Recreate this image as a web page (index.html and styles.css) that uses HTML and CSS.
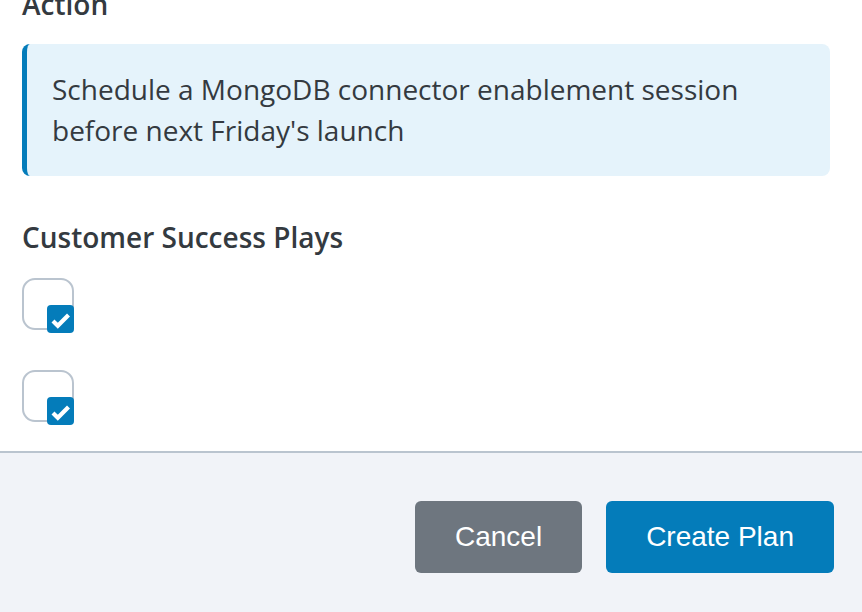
FILE: index.html
```html
<!DOCTYPE html>
<html>
<head>
<meta charset="utf-8">
<link rel="stylesheet" href="styles.css">
</head>
<body>
<div class="content">
  <h3 class="label label-top">Action</h3>
  <div class="callout">Schedule a MongoDB connector enablement session before next Friday's launch</div>
  <h3 class="label label-plays">Customer Success Plays</h3>
  <div class="plays">
    <div class="play">
      <span class="box"></span>
      <span class="check"><svg viewBox="0 0 27 28" width="27" height="28"><path d="M6 16 L10.8 20.8 L21.5 10" fill="none" stroke="#fff" stroke-width="4.2" stroke-linecap="butt" stroke-linejoin="miter"/></svg></span>
    </div>
    <div class="play">
      <span class="box"></span>
      <span class="check"><svg viewBox="0 0 27 28" width="27" height="28"><path d="M6 16 L10.8 20.8 L21.5 10" fill="none" stroke="#fff" stroke-width="4.2" stroke-linecap="butt" stroke-linejoin="miter"/></svg></span>
    </div>
  </div>
</div>
<div class="footer">
  <button class="btn btn-cancel">Cancel</button>
  <button class="btn btn-primary">Create Plan</button>
</div>
</body>
</html>
```
FILE: styles.css
```css
html, body {
  margin: 0;
  padding: 0;
  background: #ffffff;
  overflow: hidden;
}
body {
  font-family: "Open Sans", sans-serif;
  color: #343a40;
  width: 862px;
  height: 612px;
  display: flex;
  flex-direction: column;
}
.content {
  padding: 0 32px 0 22px;
}
.label {
  margin: 0;
  font-size: 28px;
  font-weight: 600;
  line-height: 36px;
  color: #343a40;
}
.label-top {
  margin-top: -14px;
  margin-bottom: 22px;
}
.callout {
  background: #e5f3fb;
  border-left: 5px solid #047cba;
  border-radius: 8px;
  padding: 25px 24px 26px 25px;
  font-size: 28px;
  line-height: 40.6px;
}
.label-plays {
  margin-top: 43px;
  margin-bottom: 23px;
}
.plays {
  display: flex;
  flex-direction: column;
  gap: 40px;
  padding-bottom: 29px;
}
.play {
  position: relative;
  width: 52px;
  height: 52px;
}
.box {
  display: block;
  box-sizing: border-box;
  width: 52px;
  height: 52px;
  border: 2px solid #bac4cf;
  border-radius: 13px;
}
.check {
  position: absolute;
  left: 25px;
  top: 27px;
  width: 27px;
  height: 28px;
  background: #047cba;
  border-radius: 4px;
  display: flex;
}
.footer {
  flex: 1;
  min-height: 0;
  border-top: 2px solid #bac4cf;
  background: #f1f3f8;
  display: flex;
  justify-content: flex-end;
  align-items: flex-start;
  gap: 24px;
  padding: 48px 28px 0 0;
}
.btn {
  font-family: "Liberation Sans", Arial, sans-serif;
  font-size: 28px;
  height: 72px;
  padding: 0 40px;
  border: none;
  border-radius: 6px;
  color: #ffffff;
  cursor: pointer;
}
.btn-cancel {
  background: #6e767f;
}
.btn-primary {
  background: #047cba;
}
```
